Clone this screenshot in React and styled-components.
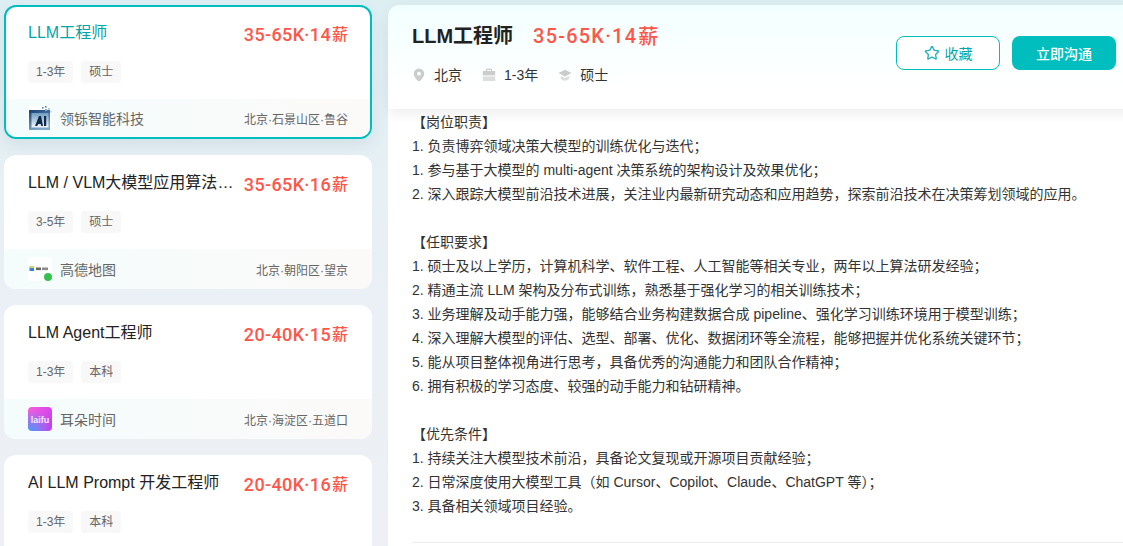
import styled, { createGlobalStyle } from 'styled-components';
import { Star } from 'lucide-react';

const jobs = [
  {
    title: 'LLM工程师',
    salary: '35-65K·14',
    tags: ['1-3年', '硕士'],
    company: '领铄智能科技',
    place: '北京·石景山区·鲁谷',
    logo: 'ai',
    active: true,
  },
  {
    title: 'LLM / VLM大模型应用算法工程师',
    salary: '35-65K·16',
    tags: ['3-5年', '硕士'],
    company: '高德地图',
    place: '北京·朝阳区·望京',
    logo: 'gaode',
  },
  {
    title: 'LLM Agent工程师',
    salary: '20-40K·15',
    tags: ['1-3年', '本科'],
    company: '耳朵时间',
    place: '北京·海淀区·五道口',
    logo: 'laifu',
  },
  {
    title: 'AI LLM Prompt 开发工程师',
    salary: '20-40K·16',
    tags: ['1-3年', '本科'],
  },
];

const sections = [
  {
    head: '【岗位职责】',
    lines: [
      '1. 负责博弈领域决策大模型的训练优化与迭代；',
      '1. 参与基于大模型的 multi-agent 决策系统的架构设计及效果优化；',
      '2. 深入跟踪大模型前沿技术进展，关注业内最新研究动态和应用趋势，探索前沿技术在决策筹划领域的应用。',
    ],
  },
  {
    head: '【任职要求】',
    lines: [
      '1. 硕士及以上学历，计算机科学、软件工程、人工智能等相关专业，两年以上算法研发经验；',
      '2. 精通主流 LLM 架构及分布式训练，熟悉基于强化学习的相关训练技术；',
      '3. 业务理解及动手能力强，能够结合业务构建数据合成 pipeline、强化学习训练环境用于模型训练；',
      '4. 深入理解大模型的评估、选型、部署、优化、数据闭环等全流程，能够把握并优化系统关键环节；',
      '5. 能从项目整体视角进行思考，具备优秀的沟通能力和团队合作精神；',
      '6. 拥有积极的学习态度、较强的动手能力和钻研精神。',
    ],
  },
  {
    head: '【优先条件】',
    lines: [
      '1. 持续关注大模型技术前沿，具备论文复现或开源项目贡献经验；',
      '2. 日常深度使用大模型工具（如 Cursor、Copilot、Claude、ChatGPT 等）；',
      '3. 具备相关领域项目经验。',
    ],
  },
];

const CompanyLogo = ({ type }) => {
  if (type === 'laifu') {
    return <LaifuLogo>laifu</LaifuLogo>;
  }
  if (type === 'gaode') {
    return (
      <LogoBox>
        <svg width="24" height="24" viewBox="0 0 24 24">
          <rect x="1.5" y="9.5" width="4.5" height="4.5" fill="#2f86d8" />
          <rect x="1.5" y="9.5" width="4.5" height="1.5" fill="#e6d75a" />
          <rect x="8" y="10.5" width="5" height="2.6" fill="#666" />
          <rect x="14" y="10.5" width="6" height="2.6" fill="#8a8a8a" />
        </svg>
        <OnlineDot />
      </LogoBox>
    );
  }
  return (
    <LogoBox>
      <svg width="24" height="24" viewBox="0 0 24 24">
        <defs>
          <linearGradient id="aiBg" x1="0" y1="0" x2="0.4" y2="1">
            <stop offset="0" stopColor="#163f70" />
            <stop offset="1" stopColor="#7fa8cb" />
          </linearGradient>
          <linearGradient id="aiFill" x1="0" y1="0" x2="0" y2="1">
            <stop offset="0" stopColor="#6f9cc2" />
            <stop offset="1" stopColor="#f2f6fa" />
          </linearGradient>
        </defs>
        <rect x="1" y="4" width="21" height="20" fill="url(#aiBg)" />
        <rect x="3.5" y="7" width="17" height="14.5" fill="url(#aiFill)" />
        <rect x="14" y="1" width="1.6" height="1.6" fill="#4f86b8" />
        <rect x="17" y="0" width="1.6" height="1.6" fill="#4f86b8" />
        <rect x="17" y="3" width="2" height="2" fill="#88aecd" />
        <rect x="20" y="2" width="1.8" height="1.8" fill="#a5c3da" />
        <rect x="22" y="5" width="1.6" height="1.6" fill="#b7cfe2" />
        <path d="M7 20 L11 10 H13 L15 20 H13.2 L12.8 18 H10.2 L9.2 20 Z" fill="#10294a" />
        <rect x="16" y="10" width="2.2" height="10" fill="#10294a" />
      </svg>
    </LogoBox>
  );
};

const PinIcon = () => (
  <svg width="14" height="14" viewBox="0 0 14 14">
    <path
      fillRule="evenodd"
      d="M7 0.5a5.2 5.2 0 0 1 5.2 5.2c0 3.2-3.4 6.6-5.2 7.8-1.8-1.2-5.2-4.6-5.2-7.8A5.2 5.2 0 0 1 7 0.5Zm0 3.3a1.9 1.9 0 1 0 0 3.8 1.9 1.9 0 0 0 0-3.8Z"
      fill="#ccc"
    />
  </svg>
);

const CaseIcon = () => (
  <svg width="14" height="14" viewBox="0 0 14 14">
    <path d="M4.5 3V1.4h5V3" fill="none" stroke="#ccc" strokeWidth="1.2" />
    <rect x="0.8" y="3" width="12.4" height="4.4" fill="#ccc" />
    <rect x="0.8" y="8.4" width="12.4" height="4.6" fill="#ddd" />
  </svg>
);

const CapIcon = () => (
  <svg width="14" height="14" viewBox="0 0 16 16">
    <path d="M8 2 15.5 5.8 8 9.6 0.5 5.8Z" fill="#ccc" />
    <path d="M3.2 9v3.4C4.4 13.9 6 14.6 8 14.6s3.6-.7 4.8-2.2V9L8 11.3Z" fill="#ddd" />
  </svg>
);

export default function App() {
  return (
    <>
      <GlobalStyle />
      <Page>
        <JobList>
          {jobs.map((job) => (
            <JobCard key={job.title} $active={job.active}>
              <JobTop $active={job.active}>
                <TitleRow>
                  <JobTitle $active={job.active}>{job.title}</JobTitle>
                  <Salary>
                    {job.salary}
                    <SalaryUnit>薪</SalaryUnit>
                  </Salary>
                </TitleRow>
                <TagRow>
                  {job.tags.map((tag) => (
                    <Tag key={tag}>{tag}</Tag>
                  ))}
                </TagRow>
              </JobTop>
              {job.company && (
                <CardFooter $active={job.active}>
                  <CompanyLogo type={job.logo} />
                  <CompanyName>{job.company}</CompanyName>
                  <Place>{job.place}</Place>
                </CardFooter>
              )}
            </JobCard>
          ))}
        </JobList>
        <Detail>
          <DetailHeader>
            <HeaderInfo>
              <HeaderTitleRow>
                <HeaderTitle>LLM工程师</HeaderTitle>
                <HeaderSalary>
                  35-65K·14
                  <HeaderUnit>薪</HeaderUnit>
                </HeaderSalary>
              </HeaderTitleRow>
              <MetaRow>
                <MetaItem>
                  <PinIcon />
                  北京
                </MetaItem>
                <MetaItem>
                  <CaseIcon />
                  1-3年
                </MetaItem>
                <MetaItem>
                  <CapIcon />
                  硕士
                </MetaItem>
              </MetaRow>
            </HeaderInfo>
            <Actions>
              <OutlineButton>
                <Star size={16} strokeWidth={2} />
                收藏
              </OutlineButton>
              <PrimaryButton>立即沟通</PrimaryButton>
            </Actions>
          </DetailHeader>
          <DetailBody>
            <Description>
              {sections.map((section) => (
                <Section key={section.head}>
                  <Line>{section.head}</Line>
                  {section.lines.map((line) => (
                    <Line key={line}>{line}</Line>
                  ))}
                </Section>
              ))}
            </Description>
          </DetailBody>
        </Detail>
      </Page>
    </>
  );
}

const GlobalStyle = createGlobalStyle`
  html, body {
    margin: 0;
    padding: 0;
    height: 546px;
    overflow: hidden;
  }
  body {
    font-family: "Liberation Sans", "Noto Sans CJK SC", sans-serif;
  }
`;

const Page = styled.div`
  display: flex;
  gap: 16px;
  height: 546px;
  padding: 5px 0 0 4px;
  box-sizing: border-box;
  overflow: hidden;
  background: linear-gradient(180deg, #deeff4 0%, #e9f0f5 45%, #eef0f5 100%);
`;

const JobList = styled.div`
  display: flex;
  flex-direction: column;
  flex-shrink: 0;
  gap: 16px;
  width: 368px;
`;

const JobCard = styled.div`
  flex-shrink: 0;
  display: flex;
  flex-direction: column;
  height: 134px;
  box-sizing: border-box;
  border-radius: 12px;
  overflow: hidden;
  background: #fff;
  border: ${(props) => (props.$active ? '2px solid #00bebd' : '0')};
  box-shadow: ${(props) => (props.$active ? '0 6px 16px rgba(60, 90, 110, 0.1)' : 'none')};
`;

const JobTop = styled.div`
  flex: 1;
  min-height: 0;
  padding: ${(props) => (props.$active ? '14px 22px 0' : '16px 24px 0')};
`;

const TitleRow = styled.div`
  display: flex;
  align-items: center;
  justify-content: space-between;
  gap: 8px;
  height: 24px;
`;

const JobTitle = styled.div`
  flex: 1;
  min-width: 0;
  font-size: 16px;
  line-height: 24px;
  color: ${(props) => (props.$active ? '#00a6a7' : '#222')};
  white-space: nowrap;
  overflow: hidden;
  text-overflow: ellipsis;
`;

const Salary = styled.div`
  flex-shrink: 0;
  display: flex;
  align-items: center;
  font-family: Roboto, "Noto Sans CJK SC", sans-serif;
  font-size: 18px;
  font-weight: 500;
  letter-spacing: 0.35px;
  line-height: 24px;
  margin-top: 4px;
  color: #fe574a;
`;

const SalaryUnit = styled.span`
  margin-left: 1px;
  font-size: 16px;
  letter-spacing: 0;
`;

const TagRow = styled.div`
  display: flex;
  gap: 8px;
  margin-top: 16px;
`;

const Tag = styled.span`
  padding: 0 8px;
  height: 22px;
  line-height: 22px;
  border-radius: 4px;
  background: #f8f8f8;
  font-size: 12px;
  color: #666;
`;

const CardFooter = styled.div`
  flex-shrink: 0;
  display: flex;
  align-items: center;
  height: ${(props) => (props.$active ? '38px' : '40px')};
  padding: ${(props) => (props.$active ? '0 22px' : '0 24px')};
  background: linear-gradient(90deg, #f4fcfc 0%, #fcfaf9 100%);
`;

const LogoBox = styled.div`
  position: relative;
  width: 24px;
  height: 24px;
  flex-shrink: 0;
  border-radius: 4px;
  background: #fff;
`;

const LaifuLogo = styled.div`
  width: 24px;
  height: 24px;
  flex-shrink: 0;
  border-radius: 4px;
  background:
    radial-gradient(circle at 10% 100%, #4f97f8 0%, rgba(79, 151, 248, 0) 65%),
    linear-gradient(120deg, #f85fdc 0%, #c13cf0 100%);
  color: #f4e8fd;
  font-family: "Liberation Sans", sans-serif;
  font-size: 9px;
  font-weight: 700;
  line-height: 26px;
  text-align: center;
`;

const OnlineDot = styled.span`
  position: absolute;
  right: 0;
  bottom: 0;
  width: 8px;
  height: 8px;
  border-radius: 50%;
  background: #36c04e;
`;

const CompanyName = styled.span`
  margin-left: 8px;
  font-size: 14px;
  color: #666;
`;

const Place = styled.span`
  margin-left: auto;
  font-size: 12px;
  color: #666;
`;

const Detail = styled.div`
  flex-shrink: 0;
  display: flex;
  flex-direction: column;
  width: 752px;
  border-radius: 12px 12px 0 0;
  background: #fff;
`;

const DetailHeader = styled.div`
  position: relative;
  flex-shrink: 0;
  display: flex;
  justify-content: space-between;
  height: 104px;
  box-sizing: border-box;
  padding: 15px 24px 0;
  border-radius: 12px 12px 0 0;
  background: linear-gradient(180deg, #f2ffff 0%, #ffffff 80%);
  box-shadow: 0 4px 14px rgba(0, 0, 0, 0.08);
`;

const HeaderInfo = styled.div`
  display: flex;
  flex-direction: column;
`;

const HeaderTitleRow = styled.div`
  display: flex;
  align-items: center;
  gap: 20px;
  height: 28px;
`;

const HeaderTitle = styled.div`
  font-size: 20px;
  font-weight: 700;
  color: #222;
`;

const HeaderSalary = styled.div`
  display: flex;
  align-items: center;
  margin-top: 3px;
  font-family: Roboto, "Noto Sans CJK SC", sans-serif;
  font-size: 20px;
  font-weight: 500;
  letter-spacing: 1.2px;
  color: #fe574a;
`;

const HeaderUnit = styled.span`
  margin-left: 1px;
  font-size: 20px;
  letter-spacing: 0;
`;

const MetaRow = styled.div`
  display: flex;
  gap: 20px;
  margin-top: 17px;
`;

const MetaItem = styled.div`
  display: flex;
  align-items: center;
  gap: 8px;
  font-size: 14px;
  line-height: 20px;
  color: #333;
`;

const Actions = styled.div`
  display: flex;
  gap: 12px;
  margin-top: 16px;
`;

const OutlineButton = styled.button`
  display: flex;
  align-items: center;
  justify-content: center;
  gap: 5px;
  width: 104px;
  height: 34px;
  box-sizing: border-box;
  padding: 0;
  border: 1px solid #00bebd;
  border-radius: 8px;
  background: #fff;
  font-family: inherit;
  font-size: 14px;
  color: #00a6a7;
  svg {
    color: #1fb2b8;
  }
`;

const PrimaryButton = styled.button`
  width: 104px;
  height: 34px;
  padding: 0;
  border: 0;
  border-radius: 8px;
  background: #00bebd;
  font-family: inherit;
  font-size: 14px;
  font-weight: 500;
  color: #fff;
`;

const DetailBody = styled.div`
  flex: 1;
  padding: 1px 0 0 24px;
`;

const Description = styled.div`
  display: flex;
  flex-direction: column;
  gap: 24px;
  padding-bottom: 24px;
  border-bottom: 1px solid #ececec;
`;

const Section = styled.div`
  display: flex;
  flex-direction: column;
`;

const Line = styled.div`
  font-size: 14px;
  line-height: 24px;
  color: #333;
  white-space: pre;
`;
